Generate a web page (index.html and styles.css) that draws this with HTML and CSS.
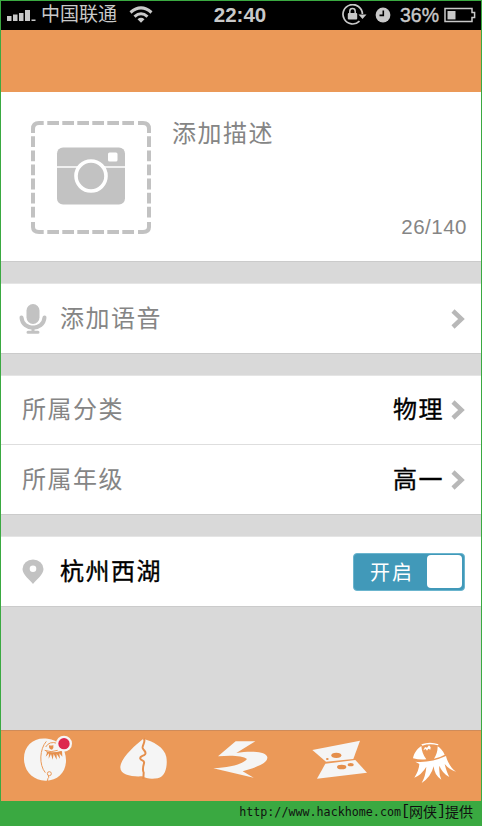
FILE: index.html
```html
<!DOCTYPE html>
<html lang="zh-CN">
<head>
<meta charset="utf-8">
<title>添加描述</title>
<link rel="stylesheet" href="styles.css">
</head>
<body>
<div class="phone">
  <header class="status">
    <div class="status-left">
      <svg class="signal" width="29" height="14" viewBox="0 0 29 14"><path d="M0 8h4.500v5H0zM6 6.500h4.500v6.500H6zM12 5h4.500v8h-4.500zM18 2h5v11h-5zM24.500 11.500h4v1.500h-4z"/></svg>
      <span class="carrier">中国联通</span>
      <svg class="wifi" width="24" height="18" viewBox="0 0 24 18"><g fill="none" stroke="#c9c9c9" stroke-width="3"><path d="M1.500 6.500Q12-2.700 22.500 6.500"/><path d="M5.500 10.600Q12 4.800 18.500 10.600"/></g><path d="M8.500 13.200Q12 10.400 15.500 13.200L12 16.800Z"/></svg>
    </div>
    <span class="time">22:40</span>
    <div class="status-right">
      <svg width="26" height="22" viewBox="0 0 26 22"><path d="M18.500 17.200A9.700 9.700 0 1 1 21.400 10" fill="none" stroke="#c9c9c9" stroke-width="1.700"/><path d="M17.500 10.500h8L21.500 15z"/><rect x="6.800" y="9" width="9.400" height="6.600" rx="1"/><path d="M8.800 9V7.300a2.700 2.700 0 0 1 5.400 0V9" fill="none" stroke="#c9c9c9" stroke-width="1.500"/></svg>
      <svg class="clock" width="16" height="16" viewBox="0 0 16 16"><circle cx="8" cy="8" r="7.400"/><path d="M8.300 3.400v5H4.500" fill="none" stroke="#000" stroke-width="1.600"/></svg>
      <span class="percent">36%</span>
      <svg class="battery" width="32" height="16" viewBox="0 0 32 16"><path d="M1 1.600h27v4h2.600v5H28v4H1z" fill="none" stroke="#c9c9c9" stroke-width="1.500"/><path d="M3.500 4h8v8.400h-8z"/></svg>
    </div>
  </header>
  <div class="navbar"></div>
  <main>
    <section class="card compose">
      <svg class="photo" width="120" height="114" viewBox="0 0 120 114">
        <g fill="none" stroke="#c2c2c2" stroke-width="4">
          <path d="M2 12V8Q2 2 8 2H12.700M107 2H112Q118 2 118 8V12M118 101V106Q118 111 112 111H107M12.700 111H8Q2 111 2 106V101"/>
          <path d="M16.300 2H106M16.300 111H106" stroke-dasharray="11.700 3.300"/>
          <path d="M2 15.300V99M118 15.300V99" stroke-dasharray="10.800 3.300"/>
        </g>
        <rect x="26" y="26.500" width="68" height="57" rx="6" fill="#c2c2c2"/>
        <path d="M26 46H94" stroke="#fff" stroke-width="1.600"/>
        <circle cx="60" cy="55" r="15" fill="#c2c2c2" stroke="#fff" stroke-width="3.600"/>
        <rect x="77" y="31.500" width="9.500" height="9" rx="1.500" fill="#fff"/>
      </svg>
      <div class="description">
        <span class="label">添加描述</span>
        <span class="count">26/140</span>
      </div>
    </section>
    <section class="card">
      <div class="row">
        <svg class="mic" width="28" height="32" viewBox="0 0 28 32"><rect x="7.500" y="1" width="13" height="20" rx="6.500" fill="#c2c2c2"/><path d="M2.500 14.500C3.500 28 24.500 28 25.500 14.500" fill="none" stroke="#c2c2c2" stroke-width="4" stroke-linecap="round"/><path d="M14 24v5M9 29.300h10" fill="none" stroke="#c2c2c2" stroke-width="3" stroke-linecap="round"/></svg>
        <span class="label">添加语音</span>
        <svg class="chevron" width="14" height="20" viewBox="0 0 14 20"><path d="M2 2l8.500 8L2 18"/></svg>
      </div>
    </section>
    <section class="card group">
      <div class="row">
        <span class="label">所属分类</span>
        <span class="value">物理</span>
        <svg class="chevron" width="14" height="20" viewBox="0 0 14 20"><path d="M2 2l8.500 8L2 18"/></svg>
      </div>
      <div class="row">
        <span class="label">所属年级</span>
        <span class="value">高一</span>
        <svg class="chevron" width="14" height="20" viewBox="0 0 14 20"><path d="M2 2l8.500 8L2 18"/></svg>
      </div>
    </section>
    <section class="card">
      <div class="row">
        <svg class="pin" width="22" height="26" viewBox="0 0 22 26"><path fill-rule="evenodd" fill="#c2c2c2" d="M11 25C7.500 20.500.5 15.500.5 10a10.500 9.500 0 0 1 21 0C21.500 15.500 14.500 20.500 11 25zM11 6.500a3.300 3.300 0 1 0 0 6.600 3.300 3.300 0 0 0 0-6.600z"/></svg>
        <span class="place">杭州西湖</span>
        <div class="switch"><span>开启</span><i class="knob"></i></div>
      </div>
    </section>
  </main>
  <nav class="tabs">
    <svg viewBox="3 15 288 213"><path d="M72 104C70 62 101 35 143 41C174 44 199 70 198 108C197 144 171 168 136 167C101 166 74 142 72 104Z"/><g class="cut"><path d="M139 49C119 72 116 119 136 143"/><path d="M134 76Q153 84 173 76M137 66Q148 47 172 55"/><circle cx="148" cy="146" r="6"/><path d="M145 152q3 6-1 8l-2 8"/></g><path class="ink" d="M147 61q8 2 13-1 2 9-4 14-10 0-9-13zM137 78Q155 86 186 77L187 95 178 85 180 101 170 87 170 104 161 87 158 104 153 87 146 101 147 85 137 95 141 83Z"/><circle cx="192" cy="56" r="24"/><circle cx="192" cy="56" r="17" fill="#dd274d"/></svg>
    <svg viewBox="291 15 288 213"><path d="M430 41C405 60 363 99 361 125C359 151 397 156 427 154C437 162 457 162 473 160C498 156 503 119 499 96C494 66 458 49 430 41Z"/><path class="crack" d="M431 40C439 49 426 60 428 69C430 77 441 80 435 88C430 94 418 93 421 101C423 108 435 105 432 115C429 125 427 135 431 143L430 162"/></svg>
    <svg viewBox="39 15 288 213"><path d="M167 49L226 49L169 84C207 78 259 77 262 97C264 117 222 128 188 139L221 158L100 130C147 127 187 119 201 102C188 91 148 91 114 94Z"/></svg>
    <svg viewBox="-33 15 288 213"><path d="M37 75L180 47L160 102L78 110Z"/><path d="M76 116L166 105L201 143L51 161Z"/><g class="ink"><ellipse cx="109" cy="91" rx="15" ry="8"/><ellipse cx="82" cy="102" rx="4" ry="3"/><ellipse cx="125" cy="126" rx="14" ry="7"/><ellipse cx="152" cy="119" rx="9" ry="5"/></g></svg>
    <svg viewBox="255 15 288 213"><g class="bright"><path d="M364 63C350 72 341 87 339 100Q358 105 379 103Q366 87 364 63Z"/><path d="M413 64Q426 72 434 89Q421 97 402 101Q413 85 413 64Z"/><path d="M364 58Q390 49 416 58L413 61Q390 54 367 62Z"/><path d="M370 76L375 66 381 68 387 61 392 67 391 74 385 71 381 77 377 72Z"/><path d="M346 110Q392 114 438 93C442 111 455 132 468 140Q449 135 434 117Q440 142 448 156Q427 145 418 122Q416 147 424 164Q403 151 401 124Q393 156 365 174Q377 153 379 125Q365 149 343 158Q357 136 358 117Z"/></g></svg>
  </nav>
</div>
<footer class="credit"><span class="url">http://www.hackhome.com</span><span class="mark">[</span><span class="site">网侠</span><span class="mark">]</span><span class="site">提供</span></footer>
</body>
</html>
```
FILE: styles.css
```css
* { box-sizing: border-box; }
body {
  margin: 0;
  width: 482px;
  height: 826px;
  overflow: hidden;
  background: #3aa941;
  font-family: "Liberation Sans", "Noto Sans CJK SC", sans-serif;
}
svg { display: block; flex: none; }
.phone {
  display: flex;
  flex-direction: column;
  height: 801px;
  padding: 1px 1px 0;
}
.status {
  display: grid;
  grid-template-columns: 1fr auto 1fr;
  align-items: center;
  height: 29px;
  padding: 0 5px 1px 6px;
  background: #000;
  color: #c9c9c9;
  fill: #c9c9c9;
}
.status-left, .status-right { display: flex; align-items: center; }
.status-right { justify-content: flex-end; }
.carrier { margin-left: 5px; font-size: 19px; line-height: 28px; }
.wifi { margin-left: 12px; }
.time { margin-right: 3px; font-size: 20.5px; font-weight: bold; line-height: 28px; }
.clock { margin-left: 8px; }
.percent { margin-left: 9px; font-size: 19.5px; -webkit-text-stroke: .4px #c9c9c9; }
.battery { margin-left: 5px; }
.navbar { height: 62px; background: #eb9958; }
main {
  display: flex;
  flex-direction: column;
  gap: 21px;
  height: 638px;
  background: #d9d9d9;
}
.card { background: #fff; border-bottom: 1px solid #cbcbcb; border-top: 1px solid #e5e5e5; }
.compose { display: flex; height: 170px; padding: 29px 14px 0 30px; border-top: 0; }
.description {
  display: flex;
  flex: 1;
  flex-direction: column;
  justify-content: space-between;
  height: 117px;
  padding-left: 21px;
}
.label, .place, .value { font-size: 24px; line-height: 26px; letter-spacing: 1.5px; }
.label { color: #858585; }
.place, .value { color: #000; -webkit-text-stroke: .35px #000; }
.count { align-self: flex-end; color: #858585; font-size: 20.5px; line-height: 22px; letter-spacing: .5px; }
.row { display: flex; align-items: center; height: 69px; padding: 0 16px 0 21px; }
.group .row:first-child { height: 68px; }
.row + .row { height: 70px; border-top: 1px solid #dedede; }
.mic { margin: 0 13px 0 -3px; }
.pin { margin-right: 16px; }
.value { margin-left: auto; }
.chevron { margin-left: 7px; fill: none; stroke: #b8b8b8; stroke-width: 4.5; }
.label + .chevron { margin-left: auto; }
.switch {
  display: flex;
  align-items: center;
  justify-content: space-between;
  width: 112px;
  height: 38px;
  margin-left: auto;
  padding: 0 2px 0 16px;
  border: 1px solid #6bb5ce;
  border-radius: 4px;
  background: #4199b9;
  color: #fff;
  font-size: 20px;
  letter-spacing: 2px;
}
.knob { width: 35px; height: 33px; border-radius: 4px; background: #fff; }
.tabs {
  display: grid;
  grid-template-columns: repeat(5, 1fr);
  height: 71px;
  background: #eb9958;
  box-shadow: inset 0 1px #cf8b59;
}
.tabs svg { width: 96px; height: 71px; fill: #f5f5f5; }
.tabs .cut { fill: none; stroke: #eb9958; stroke-width: 3; }
.tabs .ink { fill: #e58f4c; }
.tabs .bright { fill: #fff; }
.tabs .crack { fill: none; stroke: #e58f4c; stroke-width: 6; }
.credit {
  display: flex;
  align-items: center;
  justify-content: flex-end;
  height: 22px;
  padding-right: 9px;
  color: #101010;
  font-family: "DejaVu Sans Mono", "Noto Sans CJK SC", monospace;
  line-height: 20px;
}
.url { font-size: 11.7px; }
.mark { width: 8px; font-family: "Liberation Mono", monospace; font-size: 15px; }
.site { font-size: 14px; }
```
